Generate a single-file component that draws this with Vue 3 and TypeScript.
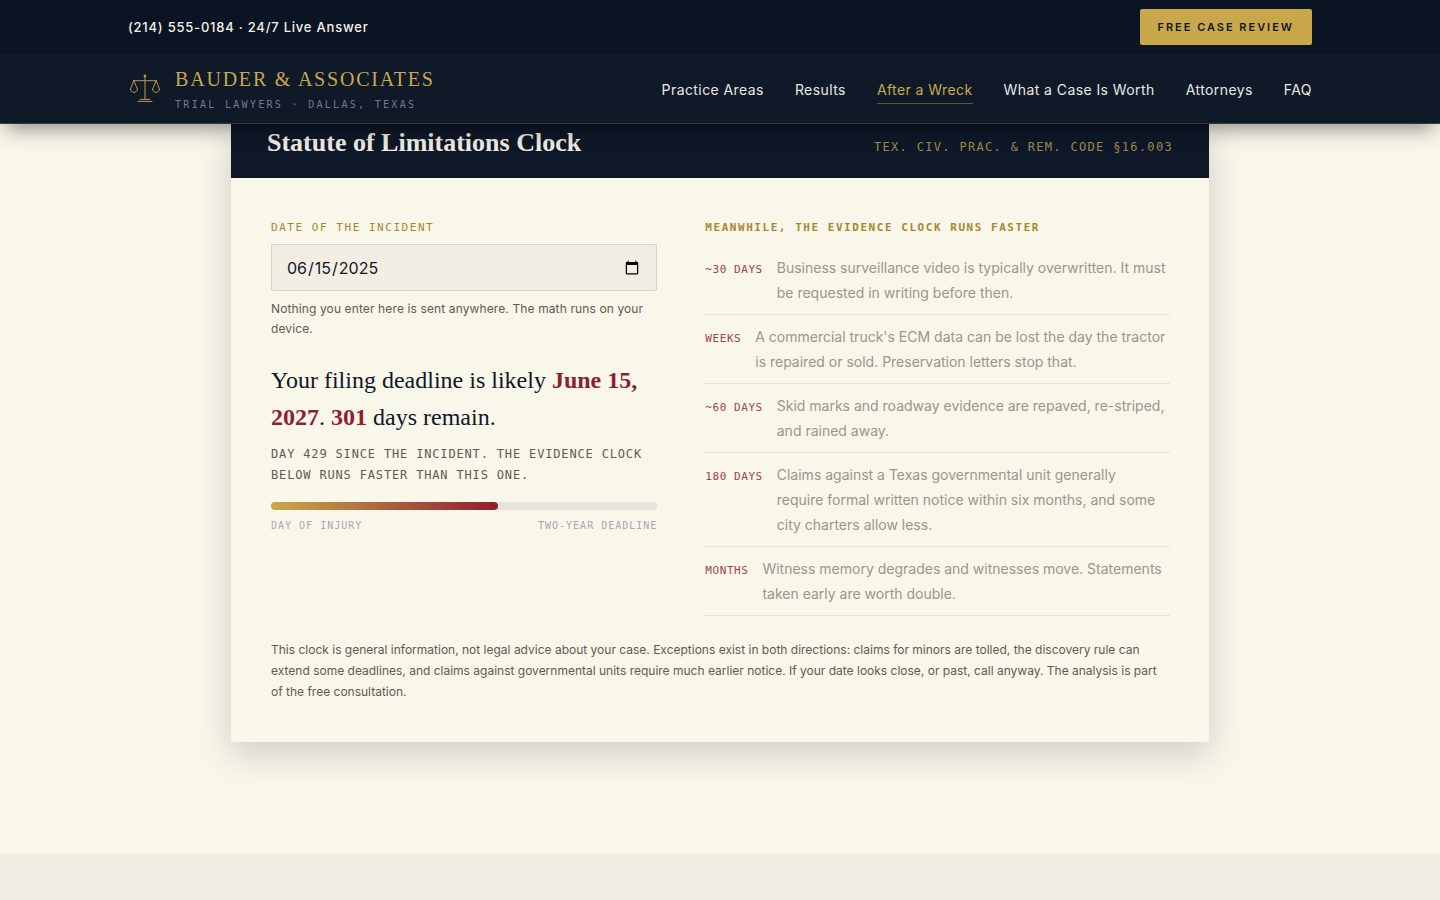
<script setup lang="ts">
import { computed, ref } from 'vue'

interface NavLink {
  label: string
  href: string
  active?: boolean
}

interface EvidenceItem {
  when: string
  text: string
}

const navLinks: NavLink[] = [
  { label: 'Practice Areas', href: '#practice' },
  { label: 'Results', href: '#results' },
  { label: 'After a Wreck', href: '#after', active: true },
  { label: 'What a Case Is Worth', href: '#worth' },
  { label: 'Attorneys', href: '#attorneys' },
  { label: 'FAQ', href: '#faq' },
]

const evidence: EvidenceItem[] = [
  { when: '~30 DAYS', text: 'Business surveillance video is typically overwritten. It must be requested in writing before then.' },
  { when: 'WEEKS', text: "A commercial truck's ECM data can be lost the day the tractor is repaired or sold. Preservation letters stop that." },
  { when: '~60 DAYS', text: 'Skid marks and roadway evidence are repaved, re-striped, and rained away.' },
  { when: '180 DAYS', text: 'Claims against a Texas governmental unit generally require\u00a0formal written notice within six months, and some city charters allow less.' },
  { when: 'MONTHS', text: 'Witness memory degrades and witnesses move. Statements taken early are worth double.' },
]

const DAY = 86400000
const today = Date.UTC(2026, 7, 18)
const incident = ref('2025-06-15')

const start = computed(() => new Date(incident.value + 'T00:00:00Z'))
const deadline = computed(() => {
  const d = new Date(start.value)
  d.setUTCFullYear(d.getUTCFullYear() + 2)
  return d
})
const elapsed = computed(() => Math.round((today - start.value.getTime()) / DAY))
const remaining = computed(() => Math.round((deadline.value.getTime() - today) / DAY))
const deadlineText = computed(() =>
  deadline.value.toLocaleDateString('en-US', { year: 'numeric', month: 'long', day: 'numeric', timeZone: 'UTC' }),
)
const progress = computed(() => (elapsed.value / (elapsed.value + remaining.value)) * 100)
</script>

<template>
  <div class="page">
    <header class="site-header">
      <div class="topbar">
        <div class="wrap bar-row">
          <a class="phone" href="tel:+12145550184">(214) 555-0184 · 24/7 Live Answer</a>
          <a class="cta" href="#review">FREE CASE REVIEW</a>
        </div>
      </div>
      <div class="mainbar">
        <div class="wrap bar-row">
          <a class="brand" href="#top">
            <svg class="scales" viewBox="0 0 34 34" fill="none" stroke="currentColor" stroke-linecap="round" stroke-linejoin="round" aria-hidden="true">
              <circle cx="17" cy="4" r="1.4" fill="currentColor" stroke="none" />
              <path d="M17 4v23.5M5.5 8.7h23" />
              <path d="M5.8 8.7 2.5 17.2M5.8 8.7 9.4 17.2M28.2 8.7 24.6 17.2M28.2 8.7 31.5 17.2" />
              <path d="M2.5 17.2c.4 4.4 6.5 4.4 6.9 0M24.6 17.2c.4 4.4 6.5 4.4 6.9 0" />
              <path d="M12.2 27.4h9.6M10 29.4h14" />
            </svg>
            <span class="brand-text">
              <span class="brand-name">BAUDER &amp; ASSOCIATES</span>
              <span class="brand-sub">TRIAL LAWYERS · DALLAS, TEXAS</span>
            </span>
          </a>
          <nav class="nav" aria-label="Main">
            <a v-for="l in navLinks" :key="l.label" :href="l.href" :class="{ active: l.active }">{{ l.label }}</a>
          </nav>
        </div>
      </div>
    </header>

    <main>
      <section class="clock-section">
        <article class="card">
          <header class="card-head">
            <h2>Statute of Limitations Clock</h2>
            <span class="code">TEX. CIV. PRAC. &amp; REM. CODE §16.003</span>
          </header>
          <div class="card-body">
            <div class="columns">
              <div class="left">
                <label class="field-label" for="incident">DATE OF THE INCIDENT</label>
                <input id="incident" v-model="incident" class="date" type="date" />
                <p class="hint">Nothing you enter here is sent anywhere. The math runs on your device.</p>
                <p class="result">
                  Your filing deadline is likely <strong>{{ deadlineText }}</strong>. <strong>{{ remaining }}</strong> days remain.
                </p>
                <p class="since">DAY {{ elapsed }} SINCE THE INCIDENT. THE EVIDENCE CLOCK BELOW RUNS FASTER THAN THIS ONE.</p>
                <div class="track"><div class="fill" :style="{ width: progress + '%' }"></div></div>
                <div class="ends"><span>DAY OF INJURY</span><span>TWO-YEAR DEADLINE</span></div>
              </div>
              <div class="right">
                <h3>MEANWHILE, THE EVIDENCE CLOCK RUNS FASTER</h3>
                <ul>
                  <li v-for="e in evidence" :key="e.when">
                    <span class="when">{{ e.when }}</span>
                    <span class="what">{{ e.text }}</span>
                  </li>
                </ul>
              </div>
            </div>
            <p class="disclaimer">
              This clock is general information, not legal advice about your case. Exceptions exist in both directions: claims for minors are tolled, the discovery rule can extend some deadlines, and claims against governmental units require much earlier notice. If your date looks close, or past, call anyway. The analysis is part of the free consultation.
            </p>
          </div>
        </article>
      </section>
      <section class="next-section"></section>
    </main>
  </div>
</template>

<style>
body {
  margin: 0;
  background: #f2eee3;
}
</style>

<style scoped>
.page {
  --sans: Inter, 'Liberation Sans', sans-serif;
  --serif: 'Liberation Serif', serif;
  --mono: 'DejaVu Sans Mono', monospace;
  --navy: #0e1828;
  --cream: #f9f6ea;
  --gold: #c9a84c;
  --crimson: #8f1f2f;
  display: flex;
  flex-direction: column;
  height: 100vh;
  overflow: hidden;
  font-family: var(--sans);
  background: var(--cream);
}
a {
  color: inherit;
  text-decoration: none;
}
p, h2, h3, ul {
  margin: 0;
  padding: 0;
}
.wrap {
  max-width: 1184px;
  margin: 0 auto;
  padding: 0 24px;
}
.bar-row {
  display: flex;
  align-items: center;
  justify-content: space-between;
}
.site-header {
  position: relative;
  z-index: 2;
  flex: none;
  box-shadow: 0 10px 20px -6px rgba(0, 0, 0, 0.45);
}
.topbar {
  background: #0b1422;
  border-bottom: 1px solid #111b2a;
}
.topbar .bar-row {
  height: 54px;
}
.phone {
  font-size: 13px;
  font-weight: 500;
  letter-spacing: 0.06em;
  color: #f4f1e8;
}
.cta {
  padding: 0 18px;
  border-radius: 2px;
  background: var(--gold);
  color: #0e1828;
  font-size: 11px;
  font-weight: 600;
  line-height: 36px;
  letter-spacing: 0.18em;
}
.mainbar {
  background: #0f1928;
  border-bottom: 1px solid #343a42;
}
.mainbar .bar-row {
  height: 68px;
}
.brand {
  display: flex;
  align-items: center;
  gap: 13px;
}
.scales {
  width: 34px;
  height: 34px;
  color: #b89a48;
}
.brand-text {
  display: flex;
  flex-direction: column;
  gap: 6px;
  padding-top: 2px;
}
.brand-name {
  font-family: var(--serif);
  font-size: 20px;
  line-height: 24px;
  letter-spacing: 0.09em;
  color: var(--gold);
}
.brand-sub {
  font-family: var(--mono);
  font-size: 10px;
  line-height: 16px;
  letter-spacing: 0.23em;
  color: #727b8c;
}
.nav {
  display: flex;
  gap: 31px;
  font-size: 14px;
  letter-spacing: 0.03em;
  color: #e9e7e0;
}
.nav a {
  padding: 5px 0 3px;
  line-height: 20px;
  border-bottom: 1px solid transparent;
}
.nav .active {
  color: var(--gold);
  border-bottom-color: #5d5439;
}
.clock-section {
  padding: 0 24px 112px;
  background: var(--cream);
}
.card {
  max-width: 978px;
  margin: 0 auto;
  box-shadow: 0 12px 32px rgba(14, 24, 40, 0.18);
  background: var(--cream);
}
.card-head {
  display: flex;
  align-items: baseline;
  justify-content: space-between;
  padding: 3px 36px 20px;
  background: var(--navy);
}
.card-head h2 {
  font-family: var(--serif);
  font-size: 26px;
  line-height: 31px;
  color: #eeebe2;
}
.code {
  font-family: var(--mono);
  font-size: 12px;
  letter-spacing: 0.11em;
  color: #a08a48;
}
.card-body {
  padding: 40px;
}
.columns {
  display: grid;
  grid-template-columns: 1fr 1.2fr;
  gap: 48px;
}
.field-label,
.right h3 {
  display: block;
  font-family: var(--mono);
  font-size: 11px;
  line-height: 20px;
  letter-spacing: 0.14em;
  color: #a8872f;
}
.date {
  box-sizing: border-box;
  display: block;
  width: 100%;
  height: 47px;
  margin-top: 6px;
  padding: 0 14px;
  border: 1px solid #d6d2c6;
  border-radius: 2px;
  background: #f2eee3;
  font-family: var(--sans);
  font-size: 16px;
  color: #0e1828;
}
.hint {
  margin-top: 8px;
  font-size: 12px;
  line-height: 20px;
  letter-spacing: 0.01em;
  color: #5f5c50;
}
.result {
  margin-top: 23px;
  font-family: var(--serif);
  font-size: 24px;
  line-height: 37px;
  color: #0e1828;
}
.result strong {
  color: var(--crimson);
}
.since {
  margin-top: 8px;
  font-family: var(--mono);
  font-size: 12px;
  line-height: 21px;
  letter-spacing: 0.07em;
  color: #5f5c50;
}
.track {
  height: 8px;
  margin-top: 16px;
  border-radius: 4px;
  background: #e6e4dc;
}
.fill {
  height: 100%;
  border-radius: 4px;
  background: linear-gradient(90deg, #c9a84c, #8f1f2f);
}
.ends {
  display: flex;
  justify-content: space-between;
  margin-top: 8px;
  font-family: var(--mono);
  font-size: 10px;
  line-height: 16px;
  letter-spacing: 0.1em;
  color: #a6a9b0;
}
.right ul {
  margin-top: 8px;
  list-style: none;
}
.right li {
  display: flex;
  align-items: baseline;
  gap: 14px;
  padding: 9px 0;
  border-bottom: 1px dotted #d6d3c8;
}
.when {
  flex: none;
  font-family: var(--mono);
  font-size: 11px;
  letter-spacing: 0.05em;
  color: #a04350;
}
.what {
  font-size: 14px;
  line-height: 25px;
  color: #9a978b;
}
.disclaimer {
  margin-top: 23px;
  font-size: 12px;
  line-height: 21px;
  color: #5f5c50;
}
.next-section {
  height: 100px;
  background: #f2eee3;
}
</style>
